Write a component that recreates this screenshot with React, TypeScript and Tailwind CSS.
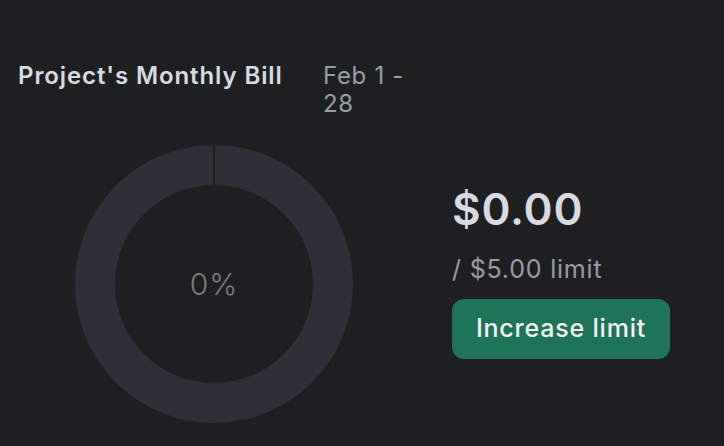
import React from "react";

export default function App() {
  return (
    <div
      className="w-[724px] h-[446px] bg-[#1e1f21] overflow-hidden"
      style={{ fontFamily: "Inter, 'Noto Sans', sans-serif" }}
    >
      <div className="flex items-start pt-[62px] pl-[18px]">
        <div className="w-[305px] text-[24px] leading-[28px] font-semibold text-[#d9d9e1] tracking-[0.9px]">
          Project's Monthly Bill
        </div>
        <div className="w-[90px] text-[24px] leading-[28px] text-[#9b9ba8] tracking-[0.7px]">Feb 1 - 28</div>
      </div>
      <div className="flex items-start mt-[27px] pl-[75px]">
        <div className="relative w-[278px] h-[278px] shrink-0">
          <svg width="278" height="278" viewBox="0 0 278 278" className="block">
            <circle cx="139" cy="139" r="119" fill="none" stroke="#2f3037" strokeWidth="40" />
            <rect x="138" y="0" width="2" height="40" fill="#1e1f21" />
          </svg>
          <div className="absolute inset-0 flex items-center justify-center text-[30px] font-light text-[#7c7c84] tracking-[1px]">
            0%
          </div>
        </div>
        <div className="ml-[99px] mt-[38px] flex flex-col items-start">
          <div className="text-[44px] leading-[52px] font-semibold text-[#d9d9e1] tracking-[0.8px]">$0.00</div>
          <div className="mt-[19px] text-[25px] leading-[30px] text-[#9b9ba8] tracking-[0.8px]">/ $5.00 limit</div>
          <button className="mt-[15px] w-[218px] h-[60px] rounded-[12px] bg-[#1f7358] text-[25px] font-medium text-[#f2f2f5] tracking-[0.8px]">
            Increase limit
          </button>
        </div>
      </div>
    </div>
  );
}
